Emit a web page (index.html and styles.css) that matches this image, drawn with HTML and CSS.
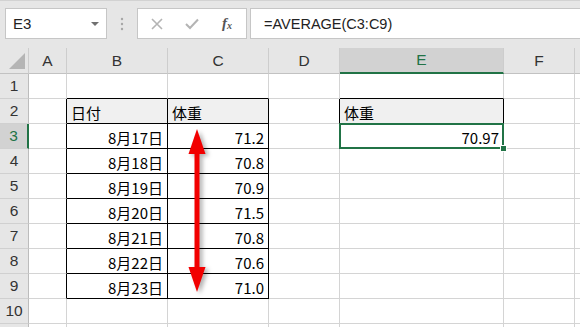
FILE: index.html
```html
<!DOCTYPE html>
<html lang="ja">

<head>
    <meta charset="UTF-8">
    <title>体重</title>
    <link rel="stylesheet" href="styles.css">
</head>

<body>
    <div class="app">
        <!-- 数式バー -->
        <div class="toolbar">
            <div class="namebox"><span>E3</span><span class="caret"></span></div>
            <div class="grip">
                <svg width="4" height="14" viewBox="0 0 4 14">
                    <circle cx="2" cy="2" r="1.2" fill="#a6a6a6" />
                    <circle cx="2" cy="7" r="1.2" fill="#a6a6a6" />
                    <circle cx="2" cy="12" r="1.2" fill="#a6a6a6" />
                </svg>
            </div>
            <div class="fxbox">
                <svg class="icon" width="12" height="12" viewBox="0 0 12 12">
                    <path d="M1 1 L11 11 M11 1 L1 11" stroke="#b4b4b4" stroke-width="1.6" fill="none" />
                </svg>
                <svg class="icon" width="14" height="12" viewBox="0 0 14 12">
                    <path d="M1 6 L5 10 L13 1.5" stroke="#b4b4b4" stroke-width="2" fill="none" />
                </svg>
                <span class="fx">f<sub>x</sub></span>
            </div>
            <div class="formula">=AVERAGE(C3:C9)</div>
        </div>

        <!-- シート -->
        <div class="sheet">
            <div class="c hd corner"><span class="tri"></span></div>
            <div class="c hd">A</div>
            <div class="c hd">B</div>
            <div class="c hd">C</div>
            <div class="c hd">D</div>
            <div class="c hd sel">E</div>
            <div class="c hd">F</div>
            <div class="c hd"></div>

            <div class="c rh">1</div>
            <div class="c"></div>
            <div class="c bb"></div>
            <div class="c bb"></div>
            <div class="c"></div>
            <div class="c bb"></div>
            <div class="c"></div>
            <div class="c"></div>

            <div class="c rh">2</div>
            <div class="c br"></div>
            <div class="c t th">日付</div>
            <div class="c t th">体重</div>
            <div class="c br"></div>
            <div class="c t th">体重</div>
            <div class="c"></div>
            <div class="c"></div>

            <div class="c rh sel">3</div>
            <div class="c br"></div>
            <div class="c t num">8月17日</div>
            <div class="c t num">71.2</div>
            <div class="c"></div>
            <div class="c num cur">70.97</div>
            <div class="c"></div>
            <div class="c"></div>

            <div class="c rh">4</div>
            <div class="c br"></div>
            <div class="c t num">8月18日</div>
            <div class="c t num">70.8</div>
            <div class="c"></div>
            <div class="c"></div>
            <div class="c"></div>
            <div class="c"></div>

            <div class="c rh">5</div>
            <div class="c br"></div>
            <div class="c t num">8月19日</div>
            <div class="c t num">70.9</div>
            <div class="c"></div>
            <div class="c"></div>
            <div class="c"></div>
            <div class="c"></div>

            <div class="c rh">6</div>
            <div class="c br"></div>
            <div class="c t num">8月20日</div>
            <div class="c t num">71.5</div>
            <div class="c"></div>
            <div class="c"></div>
            <div class="c"></div>
            <div class="c"></div>

            <div class="c rh">7</div>
            <div class="c br"></div>
            <div class="c t num">8月21日</div>
            <div class="c t num">70.8</div>
            <div class="c"></div>
            <div class="c"></div>
            <div class="c"></div>
            <div class="c"></div>

            <div class="c rh">8</div>
            <div class="c br"></div>
            <div class="c t num">8月22日</div>
            <div class="c t num">70.6</div>
            <div class="c"></div>
            <div class="c"></div>
            <div class="c"></div>
            <div class="c"></div>

            <div class="c rh">9</div>
            <div class="c br"></div>
            <div class="c t num">8月23日</div>
            <div class="c t num">71.0</div>
            <div class="c"></div>
            <div class="c"></div>
            <div class="c"></div>
            <div class="c"></div>

            <div class="c rh">10</div>
            <div class="c"></div>
            <div class="c"></div>
            <div class="c"></div>
            <div class="c"></div>
            <div class="c"></div>
            <div class="c"></div>
            <div class="c"></div>

            <!-- 11行目は上端だけ見える -->
            <div class="c rh"></div>
            <div class="c"></div>
            <div class="c"></div>
            <div class="c"></div>
            <div class="c"></div>
            <div class="c"></div>
            <div class="c"></div>
            <div class="c"></div>
        </div>

        <!-- 赤い矢印 -->
        <svg class="arrow" width="580" height="327" viewBox="0 0 580 327">
            <rect x="194.5" y="150" width="5" height="120" fill="#f20000" />
            <polygon points="197,129 188.5,154 205.5,154" fill="#f20000" />
            <polygon points="188.5,267 205.5,267 197,292" fill="#f20000" />
        </svg>
    </div>
</body>

</html>
```

FILE: styles.css
```css
/* 基本 */
body {
    margin: 0;
    background-color: #e6e6e6;
    font-family: "Noto Sans CJK JP", sans-serif;
    overflow: hidden;
}

.app {
    position: relative;
    width: 580px;
    height: 327px;
    overflow: hidden;
}

/* 数式バー */
.toolbar {
    height: 48px;
    box-sizing: border-box;
    border-top: 1px solid #d2d2d2;
    padding-top: 7px;
    display: flex;
    align-items: flex-start;
    font-family: "Liberation Sans", sans-serif;
}

.namebox {
    margin-left: 5px;
    width: 102px;
    height: 31px;
    box-sizing: border-box;
    border: 1px solid #c6c6c6;
    background-color: #fff;
    display: flex;
    align-items: center;
    justify-content: space-between;
    padding: 0 7px 0 7px;
    font-size: 15px;
    color: #222;
}

.caret {
    width: 0;
    height: 0;
    border-left: 4px solid transparent;
    border-right: 4px solid transparent;
    border-top: 4px solid #707070;
}

.grip {
    width: 30px;
    height: 31px;
    display: flex;
    align-items: center;
    justify-content: center;
}

.fxbox {
    width: 110px;
    height: 31px;
    box-sizing: border-box;
    border: 1px solid #c6c6c6;
    background-color: #fff;
    display: flex;
    align-items: center;
    padding-left: 13px;
}

.fxbox .icon {
    margin-right: 22px;
}

.fx {
    font-family: "Liberation Serif", serif;
    font-style: italic;
    font-weight: bold;
    font-size: 15px;
    color: #555;
    margin-left: 1px;
}

.fx sub {
    font-size: 10px;
    vertical-align: -1px;
}

.formula {
    flex: 1;
    margin-left: 3px;
    height: 31px;
    box-sizing: border-box;
    border: 1px solid #c6c6c6;
    border-right: none;
    background-color: #fff;
    display: flex;
    align-items: center;
    padding-left: 13px;
    font-size: 14.5px;
    color: #222;
}

/* シート */
.sheet {
    display: grid;
    grid-template-columns: 29px 38px 101px 101px 71px 164px 71px 1fr;
    grid-template-rows: 26px repeat(11, 25px);
    background-color: #fff;
}

.c {
    box-sizing: border-box;
    border-right: 1px solid #d4d4d4;
    border-bottom: 1px solid #d4d4d4;
    display: flex;
    align-items: center;
    padding: 2px 4px 0 4px;
    font-size: 15px;
    line-height: 1;
    color: #000;
    white-space: nowrap;
}

/* 見出し */
.hd {
    background-color: #e6e6e6;
    border-right-color: #cdcdcd;
    border-bottom-color: #c2c2c2;
    justify-content: center;
    font-family: "Liberation Sans", sans-serif;
    font-size: 15.5px;
    color: #333;
    padding: 0;
}

.rh {
    background-color: #e6e6e6;
    border-right-color: #bcbcbc;
    border-bottom-color: #d0d0d0;
    justify-content: center;
    font-family: "Liberation Sans", sans-serif;
    font-size: 15.5px;
    color: #333;
    padding: 0;
}

.hd.sel {
    background-color: #d2d2d2;
    color: #217346;
    border-bottom: 2px solid #217346;
}

.rh.sel {
    background-color: #d2d2d2;
    color: #217346;
    border-right: 2px solid #217346;
}

.corner {
    align-items: flex-end;
    justify-content: flex-end;
}

.tri {
    width: 0;
    height: 0;
    border-left: 16px solid transparent;
    border-bottom: 16px solid #b5b5b5;
    margin: 0 3px 4px 0;
}

/* 表の罫線 */
.t {
    border-right-color: #000;
    border-bottom-color: #000;
}

.th {
    background-color: #f0f0f0;
}

.br {
    border-right-color: #000;
}

.bb {
    border-bottom-color: #000;
}

.num {
    justify-content: flex-end;
}

/* 選択セル */
.cur {
    position: relative;
    z-index: 1;
}

.cur::after {
    content: "";
    position: absolute;
    left: -1px;
    top: -1px;
    right: -1px;
    bottom: -1px;
    border: 2px solid #217346;
}

.cur::before {
    content: "";
    position: absolute;
    right: -4px;
    bottom: -4px;
    width: 5px;
    height: 5px;
    border: 1px solid #fff;
    background-color: #217346;
    z-index: 2;
}

/* 矢印 */
.arrow {
    position: absolute;
    left: 0;
    top: 0;
    pointer-events: none;
    filter: drop-shadow(3px 2px 2px rgba(0, 0, 0, 0.3));
}
```
